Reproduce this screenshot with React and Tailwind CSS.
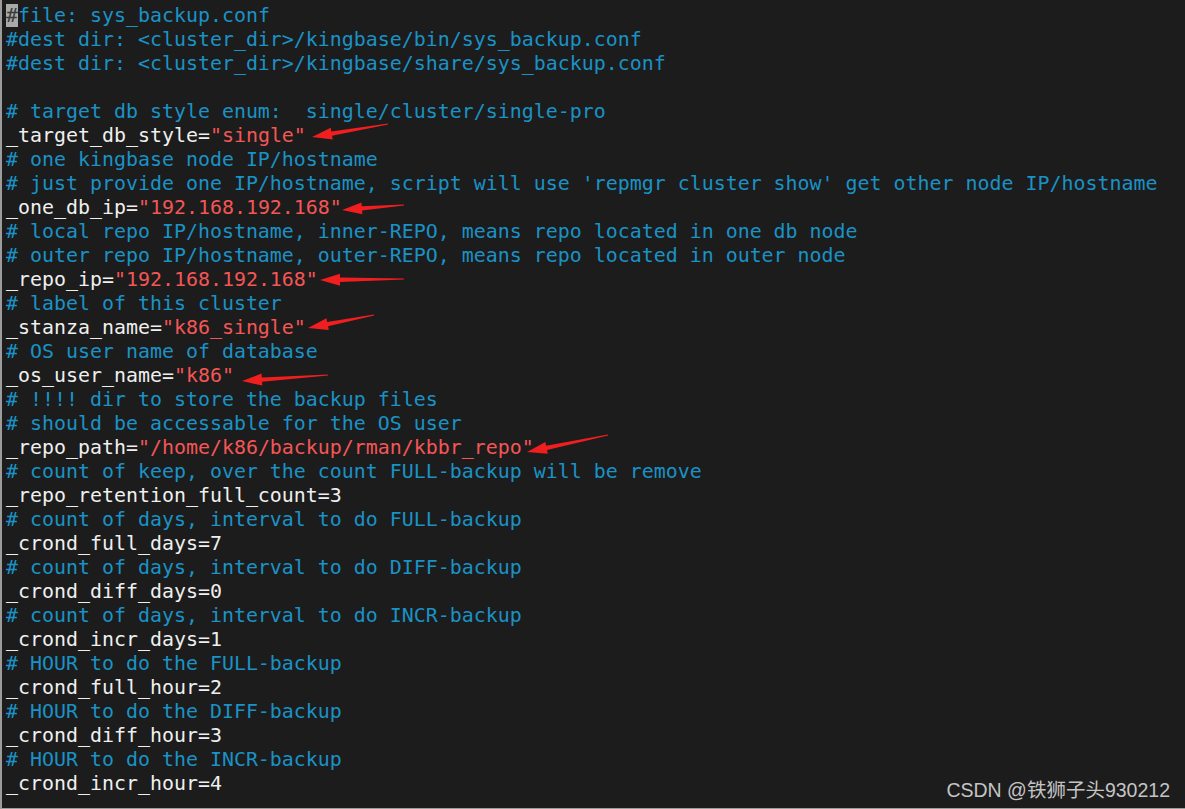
import React from 'react';

const C = 'text-[#1a92c6]';
const W = 'text-[#efefef]';
const R = 'text-[#f45656]';

// each line: list of [text, colorClass]
const lines = [
  [['file: sys_backup.conf', C]],
  [['#dest dir: <cluster_dir>/kingbase/bin/sys_backup.conf', C]],
  [['#dest dir: <cluster_dir>/kingbase/share/sys_backup.conf', C]],
  [['', W]],
  [['# target db style enum:  single/cluster/single-pro', C]],
  [['_target_db_style=', W], ['"single"', R]],
  [['# one kingbase node IP/hostname', C]],
  [["# just provide one IP/hostname, script will use 'repmgr cluster show' get other node IP/hostname", C]],
  [['_one_db_ip=', W], ['"192.168.192.168"', R]],
  [['# local repo IP/hostname, inner-REPO, means repo located in one db node', C]],
  [['# outer repo IP/hostname, outer-REPO, means repo located in outer node', C]],
  [['_repo_ip=', W], ['"192.168.192.168"', R]],
  [['# label of this cluster', C]],
  [['_stanza_name=', W], ['"k86_single"', R]],
  [['# OS user name of database', C]],
  [['_os_user_name=', W], ['"k86"', R]],
  [['# !!!! dir to store the backup files', C]],
  [['# should be accessable for the OS user', C]],
  [['_repo_path=', W], ['"/home/k86/backup/rman/kbbr_repo"', R]],
  [['# count of keep, over the count FULL-backup will be remove', C]],
  [['_repo_retention_full_count=3', W]],
  [['# count of days, interval to do FULL-backup', C]],
  [['_crond_full_days=7', W]],
  [['# count of days, interval to do DIFF-backup', C]],
  [['_crond_diff_days=0', W]],
  [['# count of days, interval to do INCR-backup', C]],
  [['_crond_incr_days=1', W]],
  [['# HOUR to do the FULL-backup', C]],
  [['_crond_full_hour=2', W]],
  [['# HOUR to do the DIFF-backup', C]],
  [['_crond_diff_hour=3', W]],
  [['# HOUR to do the INCR-backup', C]],
  [['_crond_incr_hour=4', W]],
];

// red pointer arrows: [tailX, tailY, headX, headY]
const arrows = [
  [386, 124, 310, 137],
  [402, 205, 340, 210],
  [402, 279, 318, 280],
  [372, 315, 306, 328],
  [326, 375, 240, 381],
  [606, 435, 525, 452],
];

const Arrow = ({ a }) => {
  const [x1, y1, x2, y2] = a;
  const dx = x2 - x1;
  const dy = y2 - y1;
  const len = Math.hypot(dx, dy);
  const ux = dx / len;
  const uy = dy / len;
  const px = -uy;
  const py = ux;
  const hl = 20;
  const hw = 6;
  const bx = x2 - ux * hl;
  const by = y2 - uy * hl;
  const shaft = `${x1 + px * 0.6},${y1 + py * 0.6} ${bx + px * 2.2},${by + py * 2.2} ${bx + px * hw},${by + py * hw} ${x2},${y2} ${bx - px * hw},${by - py * hw} ${bx - px * 2.2},${by - py * 2.2} ${x1 - px * 0.6},${y1 - py * 0.6}`;
  return <polygon points={shaft} fill="#f01e1e" />;
};

const App = () => {
  return (
    <div className="relative w-[1185px] h-[809px] overflow-hidden bg-[#1c1c1c] border-l-2 border-b border-[#9c9c9c]">
      <div className="pl-[4px] pt-[4px] font-['DejaVu_Sans_Mono',monospace] text-[19.93px] leading-[24px] whitespace-pre">
        {lines.map((line, i) => (
          <div key={i} className="h-[24px]">
            {i === 0 && <span className="bg-[#a9a9a9] text-[#3a3a3a]">#</span>}
            {line.map(([t, c], j) => (
              <span key={j} className={c}>{t}</span>
            ))}
          </div>
        ))}
      </div>

      <svg className="absolute left-0 top-0 pointer-events-none" width="1185" height="809">
        {arrows.map((a, i) => <Arrow key={i} a={a} />)}
      </svg>

      <div className="absolute right-[15px] bottom-[6px] text-[19.5px] leading-[24px] text-[#c4c4c4] font-['Liberation_Sans','Noto_Sans_CJK_SC',sans-serif]">
        CSDN @铁狮子头930212
      </div>
    </div>
  );
};

export default App;
